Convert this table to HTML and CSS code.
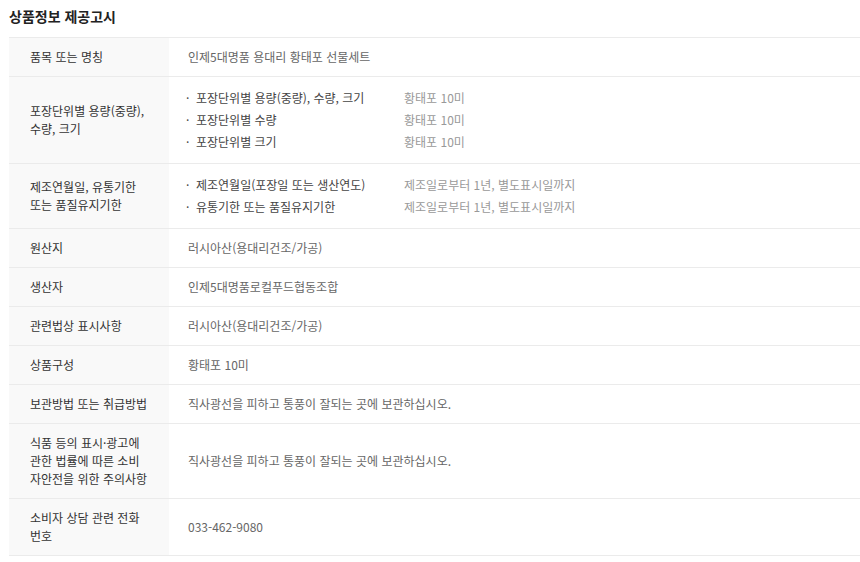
FILE: index.html
```html
<!DOCTYPE html>
<html lang="ko">
<head>
<meta charset="utf-8">
<title>상품정보 제공고시</title>
<link rel="stylesheet" href="styles.css">
</head>
<body>
<div class="notice">
  <h2 class="notice-title">상품정보 제공고시</h2>
  <table class="info-table">
    <tbody>
      <tr>
        <th>품목 또는 명칭</th>
        <td>인제5대명품 용대리 황태포 선물세트</td>
      </tr>
      <tr>
        <th>포장단위별 용량(중량),<br>수량, 크기</th>
        <td>
          <ul class="spec-list">
            <li><span class="spec-name">포장단위별 용량(중량), 수량, 크기</span><span class="spec-value">황태포 10미</span></li>
            <li><span class="spec-name">포장단위별 수량</span><span class="spec-value">황태포 10미</span></li>
            <li><span class="spec-name">포장단위별 크기</span><span class="spec-value">황태포 10미</span></li>
          </ul>
        </td>
      </tr>
      <tr>
        <th>제조연월일, 유통기한<br>또는 품질유지기한</th>
        <td>
          <ul class="spec-list">
            <li><span class="spec-name">제조연월일(포장일 또는 생산연도)</span><span class="spec-value">제조일로부터 1년, 별도표시일까지</span></li>
            <li><span class="spec-name">유통기한 또는 품질유지기한</span><span class="spec-value">제조일로부터 1년, 별도표시일까지</span></li>
          </ul>
        </td>
      </tr>
      <tr>
        <th>원산지</th>
        <td>러시아산(용대리건조/가공)</td>
      </tr>
      <tr>
        <th>생산자</th>
        <td>인제5대명품로컬푸드협동조합</td>
      </tr>
      <tr>
        <th>관련법상 표시사항</th>
        <td>러시아산(용대리건조/가공)</td>
      </tr>
      <tr>
        <th>상품구성</th>
        <td>황태포 10미</td>
      </tr>
      <tr>
        <th>보관방법 또는 취급방법</th>
        <td>직사광선을 피하고 통풍이 잘되는 곳에 보관하십시오.</td>
      </tr>
      <tr>
        <th>식품 등의 표시·광고에<br>관한 법률에 따른 소비<br>자안전을 위한 주의사항</th>
        <td>직사광선을 피하고 통풍이 잘되는 곳에 보관하십시오.</td>
      </tr>
      <tr>
        <th>소비자 상담 관련 전화<br>번호</th>
        <td>033-462-9080</td>
      </tr>
    </tbody>
  </table>
</div>
</body>
</html>
```

FILE: styles.css
```css
html, body {
  margin: 0;
  padding: 0;
  background: #fff;
}
body {
  font-family: "Noto Sans CJK KR", "Noto Sans", sans-serif;
  font-size: 12px;
  color: #333;
}
.notice {
  padding: 0 0 0 9px;
}
.notice-title {
  margin: 0;
  height: 37px;
  line-height: 32px;
  font-size: 14px;
  font-weight: 700;
  color: #222;
}
.info-table {
  width: 100%;
  border-collapse: collapse;
  border-top: 1px solid #ebebeb;
}
.info-table tr {
  border-bottom: 1px solid #ebebeb;
}
.info-table th,
.info-table td {
  padding: 10px 0;
  line-height: 18px;
  vertical-align: middle;
  text-align: left;
}
.info-table th {
  width: 160px;
  box-sizing: border-box;
  padding-left: 21px;
  padding-right: 8px;
  background: #f9f9f9;
  font-weight: 400;
  color: #333;
}
.info-table td {
  padding-left: 19px;
  color: #666;
}
.spec-list {
  list-style: none;
  margin: 0;
  padding: 0;
}
.spec-list li {
  display: flex;
  line-height: 22px;
}
.spec-name {
  position: relative;
  width: 216px;
  padding-left: 8px;
  color: #444;
  box-sizing: border-box;
}
.spec-name::before {
  content: "·";
  position: absolute;
  left: -2px;
  top: 0;
}
.spec-value {
  color: #999;
}
```
